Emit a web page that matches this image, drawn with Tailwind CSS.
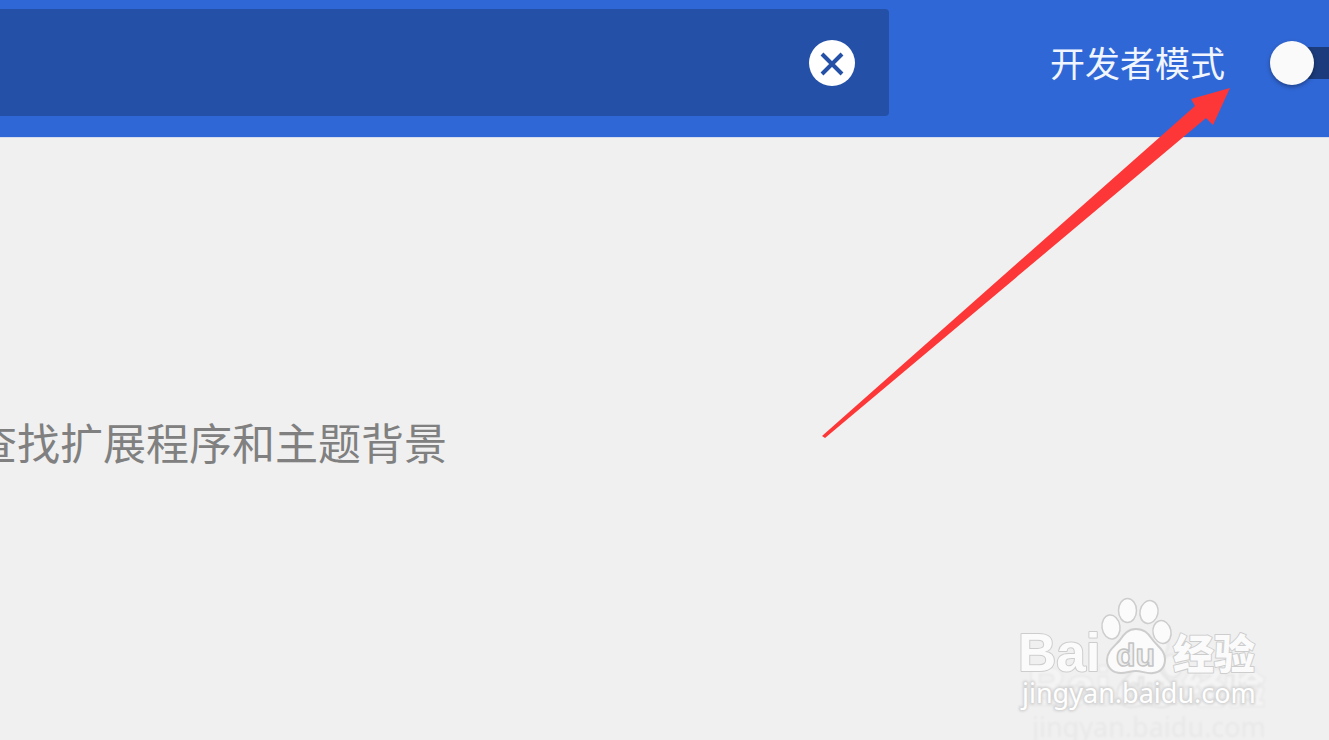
<!DOCTYPE html>
<html lang="zh-CN">

<head>
    <meta charset="UTF-8">
    <meta name="viewport" content="width=device-width, initial-scale=1.0">
    <title>扩展程序</title>
    <script src="https://cdn.jsdelivr.net/npm/@tailwindcss/browser@4"></script>
</head>

<body class="relative min-h-screen overflow-hidden bg-[#f0f0f0] font-['Noto_Sans_CJK_SC',sans-serif]">

    <header class="flex items-start bg-[#3067d6] pt-[9px] pb-[21px] border-b border-[#d5dcec]">
        <form class="flex h-[107px] flex-1 items-center rounded-r bg-[#2450a7] pr-[34px]">
            <input type="text" aria-label="搜索扩展程序"
                class="h-full min-w-0 flex-1 bg-transparent px-4 text-4xl text-white outline-none">
            <button type="reset" aria-label="清除"
                class="flex size-[46px] items-center justify-center rounded-full bg-white">
                <svg class="size-[46px]" viewBox="0 0 46 46" fill="none" stroke="#2450a7" stroke-width="4">
                    <path d="M13 14l20 20M33 14l-20 20" />
                </svg>
            </button>
        </form>

        <div class="flex h-[107px] w-[440px] items-center justify-between overflow-hidden pl-[161px]">
            <label for="dev-mode" class="pb-0.5 text-[35px] leading-[48px] whitespace-nowrap text-[#f0f5ff]">开发者模式</label>
            <div class="relative flex h-11 w-[59px] items-center justify-end">
                <input type="checkbox" id="dev-mode" class="peer absolute inset-0 size-full cursor-pointer opacity-0">
                <span class="pointer-events-none h-8 w-[38px] bg-[#1b3b7c]"></span>
                <span
                    class="pointer-events-none absolute top-0 left-0 size-11 rounded-full bg-[#fafafa] shadow-[0_2px_4px_rgba(0,0,0,0.35)]"></span>
            </div>
        </div>
    </header>

    <main class="pt-[271px]">
        <p class="-ml-[26px] text-[43px] leading-[64px] whitespace-nowrap text-[#808080]">查找扩展程序和主题背景</p>
    </main>

    <!-- arrow pointing at the developer mode switch -->
    <svg class="pointer-events-none absolute top-[80px] right-[89px] h-[370px] w-[430px]" viewBox="810 80 430 370"
        fill="#fd3737" aria-hidden="true">
        <path d="M822 436L1195 106L1191 99L1230 88L1213 125L1206 118L825 438Z" />
    </svg>

    <!-- watermark -->
    <svg class="pointer-events-none absolute right-[39px] bottom-0 h-[160px] w-[290px]" viewBox="1000 580 290 160">
        <defs>
            <filter id="soft" x="-10%" y="-10%" width="120%" height="120%">
                <feGaussianBlur stdDeviation="1" />
            </filter>
            <g id="logo" fill="#fbfbfb" stroke="#cdcdcd" stroke-width="2" stroke-linejoin="round">
                <text x="1018" y="671" font-family="Liberation Sans" font-weight="700" font-size="53"
                    paint-order="stroke">Bai</text>
                <ellipse cx="1111" cy="627" rx="9" ry="12" stroke-width="1.500" transform="rotate(-8 1111 627)" />
                <ellipse cx="1127.500" cy="610.500" rx="9" ry="12" stroke-width="1.500" />
                <ellipse cx="1149" cy="612" rx="9" ry="11.500" stroke-width="1.500" transform="rotate(12 1149 612)" />
                <ellipse cx="1162" cy="632" rx="9" ry="11.500" stroke-width="1.500" transform="rotate(-12 1162 632)" />
                <path
                    d="M1136 629C1128 629 1124 634 1120 640C1115 646 1107 651 1107 660C1107 668 1113 673 1121 673C1127 673 1130 671 1136 671C1142 671 1147 674 1153 673C1161 672 1165 667 1165 659C1165 650 1157 646 1152 639C1148 633 1144 629 1136 629Z" />
                <text x="1116" y="666" font-family="Liberation Sans" font-weight="700" font-size="32"
                    stroke-width="1.500" stroke="#c4c4c4" fill="#f0f0f0">du</text>
                <text x="1173" y="669" font-family="Noto Sans CJK SC" font-weight="900" font-size="41"
                    paint-order="stroke">经验</text>
            </g>
        </defs>
        <!-- reflection under the logo -->
        <g filter="url(#soft)" aria-hidden="true">
            <use href="#logo" x="10" y="34" opacity="0.4" />
            <text x="1032" y="737" font-family="Noto Sans" font-size="27" fill="#e8e8e8">jingyan.baidu.com</text>
        </g>
        <text x="1022" y="703" font-family="Noto Sans" font-size="27" fill="#d2d2d2" stroke="#d2d2d2" stroke-width="3"
            filter="url(#soft)" aria-hidden="true">jingyan.baidu.com</text>
        <use href="#logo" />
        <text x="1022" y="703" font-family="Noto Sans" font-size="27" fill="#fff">jingyan.baidu.com</text>
    </svg>

</body>

</html>
